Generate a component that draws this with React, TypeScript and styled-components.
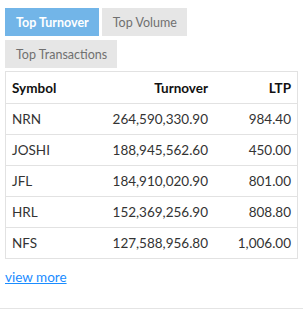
import styled, { createGlobalStyle } from 'styled-components'

const GlobalStyle = createGlobalStyle`
  body {
    margin: 0;
    background: #fff;
    font-family: Lato, "Liberation Sans", sans-serif;
  }
`

const Panel = styled.div`
  padding: 8px 5px 0 5px;
  border-bottom: 1px solid #e4e4e4;
  height: 309px;
  box-sizing: border-box;
`

const TabRow = styled.div`
  display: flex;
  flex-wrap: wrap;
  gap: 4px 3px;
`

const Tab = styled.button<{ $active?: boolean }>`
  border: none;
  height: 28px;
  padding: 0 10px 0 11px;
  font-family: inherit;
  font-size: 12.5px;
  font-weight: ${p => (p.$active ? 700 : 400)};
  color: ${p => (p.$active ? '#fff' : '#707070')};
  background-color: ${p => (p.$active ? '#72b5e8' : '#e6e6e6')};
  cursor: pointer;
`

const Table = styled.table`
  width: 100%;
  margin-top: 3px;
  border-collapse: collapse;
  border: 1px solid #e2e2e2;
  font-size: 13.5px;
  color: #333;
`

const HeadCell = styled.th<{ $right?: boolean }>`
  height: 31px;
  padding: 0 6px;
  text-align: ${p => (p.$right ? 'right' : 'left')};
  font-weight: 700;
  color: #111;
  border-bottom: 1px solid #e2e2e2;
`

const Cell = styled.td<{ $right?: boolean }>`
  height: 30px;
  padding: 0 6px;
  text-align: ${p => (p.$right ? 'right' : 'left')};
  border-bottom: 1px solid #e2e2e2;
`

const MoreLink = styled.a`
  display: inline-block;
  margin-top: 10px;
  font-size: 13.5px;
  color: #1a8cff;
  text-decoration: underline;
`

const rows = [
  { symbol: 'NRN', turnover: '264,590,330.90', ltp: '984.40' },
  { symbol: 'JOSHI', turnover: '188,945,562.60', ltp: '450.00' },
  { symbol: 'JFL', turnover: '184,910,020.90', ltp: '801.00' },
  { symbol: 'HRL', turnover: '152,369,256.90', ltp: '808.80' },
  { symbol: 'NFS', turnover: '127,588,956.80', ltp: '1,006.00' },
]

export default function App() {
  return (
    <>
      <GlobalStyle />
      <Panel>
        <TabRow>
          <Tab $active>Top Turnover</Tab>
          <Tab>Top Volume</Tab>
          <Tab>Top Transactions</Tab>
        </TabRow>
        <Table>
          <thead>
            <tr>
              <HeadCell>Symbol</HeadCell>
              <HeadCell $right>Turnover</HeadCell>
              <HeadCell $right>LTP</HeadCell>
            </tr>
          </thead>
          <tbody>
            {rows.map(r => (
              <tr key={r.symbol}>
                <Cell>{r.symbol}</Cell>
                <Cell $right>{r.turnover}</Cell>
                <Cell $right>{r.ltp}</Cell>
              </tr>
            ))}
          </tbody>
        </Table>
        <MoreLink href="#">view more</MoreLink>
      </Panel>
    </>
  )
}
